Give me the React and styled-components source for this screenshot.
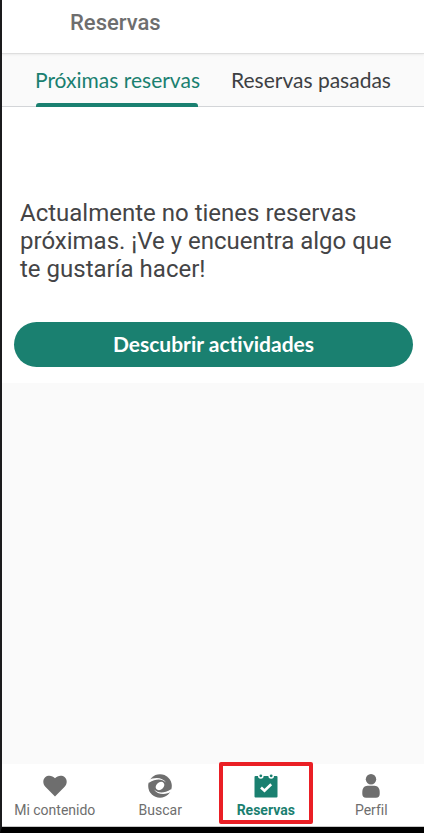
import React from "react";
import styled, { createGlobalStyle } from "styled-components";

const GREEN = "#1a8070";
const GREY = "#6e6e6e";

const GlobalStyle = createGlobalStyle`
  *, *::before, *::after { box-sizing: border-box; }
  body {
    margin: 0;
    background: #000;
    font-family: Roboto, sans-serif;
    font-variant-ligatures: none;
  }
  h1, p { margin: 0; }
  button { font: inherit; font-variant-ligatures: none; border: 0; cursor: pointer; }
`;

const Screen = styled.div`
  min-height: 100vh;
  display: flex;
  flex-direction: column;
  background: #fafafa;
  border-left: 2px solid #1b1b1d;
  border-bottom: 6px solid #000;
`;

const Header = styled.header`
  height: 54px;
  padding: 9px 68px 0;
  background: #fff;
  border-bottom: 1px solid #dedede;
  box-shadow: 0 1px 2px rgba(0, 0, 0, 0.06);
`;

const Title = styled.h1`
  font-size: 22px;
  line-height: 28px;
  font-weight: 500;
  color: ${GREY};
`;

const TabList = styled.div`
  display: flex;
  gap: 31px;
  height: 53px;
  padding: 0 33px;
  border-bottom: 1px solid #d3d5d8;
`;

const Tab = styled.button`
  position: relative;
  padding: 0;
  background: none;
  white-space: nowrap;
  color: ${(p) => (p.$active ? GREEN : "#3d4043")};
  && {
    font-family: Lato, sans-serif;
    font-size: 21px;
    line-height: 28px;
  }

  &::after {
    content: "";
    display: ${(p) => (p.$active ? "block" : "none")};
    position: absolute;
    left: 1px;
    right: 2px;
    bottom: -1px;
    height: 4px;
    border-radius: 3px 3px 0 0;
    background: ${GREEN};
  }
`;

const EmptyState = styled.section`
  padding: 92px 11px 16px 12px;
  background: #fff;
`;

const Message = styled.p`
  padding: 0 6px;
  font-size: 24px;
  line-height: 28px;
  color: #444446;
`;

const PrimaryButton = styled.button`
  display: block;
  width: 100%;
  height: 45px;
  margin-top: 39px;
  padding: 0 16px 2px;
  border-radius: 23px;
  background: ${GREEN};
  color: #fff;
  && {
    font-family: Lato, sans-serif;
    font-size: 21px;
    font-weight: 700;
  }
`;

const BottomNav = styled.nav`
  display: grid;
  grid-template-columns: repeat(4, 1fr);
  height: 63px;
  margin-top: auto;
  background: #fff;
  border-bottom: 1px solid #c8c8c8;
`;

const NavItem = styled.button`
  position: relative;
  display: flex;
  flex-direction: column;
  align-items: center;
  gap: 4px;
  padding: 10px 0 0;
  background: none;
  white-space: nowrap;
  color: ${(p) => (p.$active ? GREEN : GREY)};
  && {
    font-size: 14px;
    line-height: 16px;
    font-weight: ${(p) => (p.$active ? 700 : 400)};
  }
`;

const Highlight = styled.span`
  position: absolute;
  inset: -2px 6px 2px;
  border: 4px solid #ea1f25;
  border-radius: 2px;
  pointer-events: none;
`;

const Icon = styled.svg`
  width: 24px;
  height: 24px;
  fill: currentColor;
`;

const HeartIcon = () => (
  <Icon viewBox="0 0 24 24" aria-hidden="true">
    <path d="M12 22.5 2.6 13C-.5 9.8-.3 5.5 2.2 3.3 5 .9 9.4 1.5 12 4.3c2.6-2.8 7-3.4 9.8-1C24.3 5.5 24.5 9.8 21.4 13Z" />
  </Icon>
);

const gap = "M-1 7C6 2.5 14.5 3 18 8.500 13.500 4.600 8 4.600 1 8.800Z";

const SearchIcon = () => (
  <Icon viewBox="0 0 24 24" aria-hidden="true">
    <circle cx="12" cy="12" r="11.8" />
    <g fill="#fff">
      <ellipse cx="12" cy="12" rx="4.8" ry="3.6" transform="rotate(-40 12 12)" />
      <path d={gap} />
      <path d={gap} transform="rotate(180 12 12)" />
    </g>
  </Icon>
);

const CalendarIcon = () => (
  <Icon viewBox="0 0 24 24" aria-hidden="true">
    <path d="M1.5 2H4a2.8 2.8 0 0 0 5.6 0h4.8a2.8 2.8 0 0 0 5.6 0h2.5a1 1 0 0 1 1 1v19.5a1 1 0 0 1-1 1h-21a1 1 0 0 1-1-1V3a1 1 0 0 1 1-1Z" />
    <circle cx="6.8" cy="1.8" r="1.4" />
    <circle cx="17.2" cy="1.8" r="1.4" />
    <path d="m7 13.5 3.5 3.3 6.7-6.6" fill="none" stroke="#fff" strokeWidth="2.6" />
  </Icon>
);

const PersonIcon = () => (
  <Icon viewBox="0 0 24 24" aria-hidden="true">
    <circle cx="12" cy="5.3" r="5.2" />
    <path d="M8.5 11.7h7c3.3 0 5.2 2.8 5.2 6.3v2c0 2.4-1.3 3.7-3.7 3.7H7c-2.4 0-3.7-1.3-3.7-3.7v-2c0-3.5 1.9-6.3 5.2-6.3Z" />
  </Icon>
);

const navItems = [
  { label: "Mi contenido", Glyph: HeartIcon },
  { label: "Buscar", Glyph: SearchIcon },
  { label: "Reservas", Glyph: CalendarIcon, active: true },
  { label: "Perfil", Glyph: PersonIcon },
];

export default function App() {
  return (
    <>
      <GlobalStyle />
      <Screen>
        <Header>
          <Title>Reservas</Title>
        </Header>
        <TabList role="tablist">
          <Tab role="tab" aria-selected="true" $active>
            Próximas reservas
          </Tab>
          <Tab role="tab" aria-selected="false">
            Reservas pasadas
          </Tab>
        </TabList>
        <EmptyState>
          <Message>
            Actualmente no tienes reservas próximas. ¡Ve y encuentra algo que te gustaría hacer!
          </Message>
          <PrimaryButton>Descubrir actividades</PrimaryButton>
        </EmptyState>
        <BottomNav>
          {navItems.map(({ label, Glyph, active }) => (
            <NavItem key={label} $active={active} aria-current={active ? "page" : undefined}>
              <Glyph />
              {label}
              {active && <Highlight />}
            </NavItem>
          ))}
        </BottomNav>
      </Screen>
    </>
  );
}
